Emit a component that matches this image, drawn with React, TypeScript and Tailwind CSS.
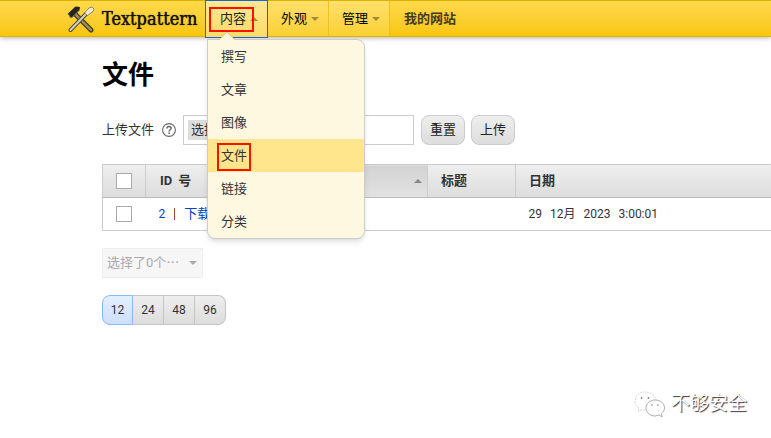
const menus = [
  { label: '内容', open: true },
  { label: '外观', open: false },
  { label: '管理', open: false },
];

const contentItems = ['撰写', '文章', '图像', '文件', '链接', '分类'];

const pageSizes = [12, 24, 48, 96];

function Arrow({ up = false, className = '' }) {
  return (
    <svg width="8" height="4" viewBox="0 0 8 4" className={className} aria-hidden="true">
      <path d={up ? 'M0 4 4 0l4 4z' : 'M0 0h8L4 4z'} fill="currentColor" />
    </svg>
  );
}

function Logo() {
  return (
    <svg width="28" height="28" viewBox="0 0 28 28" className="shrink-0" aria-hidden="true">
      {/* hammer */}
      <path d="M8 9 24 25" stroke="#4a4020" strokeWidth="5" strokeLinecap="round" />
      <path d="M8 9 24 25" stroke="#a39258" strokeWidth="2.4" strokeLinecap="round" />
      <path d="M1 8.5 8.5 1.5 13 2 12.5 5 5 12.5 3.5 12.5z" fill="#26251f" />
      <path d="M1 8.5 3.5 12.5 5 12.5 12.5 5" fill="none" stroke="#6d6a5c" />
      {/* chisel */}
      <path d="M3.5 25 19 9" stroke="#4d4a3a" strokeWidth="4" strokeLinecap="round" />
      <path d="M3.5 25 19 9" stroke="#d6d0b4" strokeWidth="2" strokeLinecap="round" />
      <path d="M17.5 8 22 3 25 2 27 4 26 6.500 20.5 10.5z" fill="#efe9cf" stroke="#77715a" strokeWidth="0.8" />
    </svg>
  );
}

function ContentMenu() {
  return (
    <div className="absolute left-px top-[38px] z-20 w-[158px]">
      <svg width="16" height="9" viewBox="0 0 16 9" className="absolute -top-2 left-3" aria-hidden="true">
        <path d="M0 9 8 1l8 8z" fill="#fff8e1" />
        <path d="M0 9 8 1l8 8" fill="none" stroke="#d8c070" strokeWidth="0.8" />
      </svg>
      <ul className="overflow-hidden rounded-b-lg rounded-tr-lg border border-[#ccc] bg-[#fff8e1] shadow-md">
        {contentItems.map((item) => (
          <li key={item} className={item === '文件' ? 'relative bg-[#ffe68c]' : 'relative'}>
            <a href="#" className="block px-[13px] text-[13px] leading-[33px] text-[#333]">
              {item}
            </a>
            {item === '文件' && (
              <span className="pointer-events-none absolute left-[9px] top-1 h-7 w-[34px] border-2 border-[#f10]" />
            )}
          </li>
        ))}
      </ul>
    </div>
  );
}

function Header() {
  return (
    <header className="relative z-10 flex h-[37px] border-y border-[#dfb000] bg-linear-to-b from-[#ffd94a] to-[#f9c606] pl-[67px] shadow-[0_1px_5px_rgba(0,0,0,0.3)]">
      <a href="#" className="flex w-[138px] shrink-0 items-center gap-[7px] font-['DejaVu_Serif_Condensed','DejaVu_Serif',serif] text-[18px] text-[#111] [text-shadow:0_0_1px_#111]">
        <Logo />
        Textpattern
      </a>
      <nav className="flex">
        {menus.map((menu) => (
          <div
            key={menu.label}
            className={
              menu.open
                ? 'relative -my-px h-[38px] w-[63px] border border-[#1766d0] bg-linear-to-b from-[#ffe893] to-[#fbdb68]'
                : 'w-[61px] border-r border-[#eec21c] bg-linear-to-b from-[#ffe06a] to-[#fad02f]'
            }
          >
            <button
              className={
                menu.open
                  ? 'flex h-9 w-full items-center gap-1 pl-3.5 text-[13px] text-[#222]'
                  : 'flex h-9 w-full items-center gap-1 pl-[13px] text-[13px] text-black'
              }
            >
              {menu.label}
              <Arrow up={menu.open} className="text-[#a48a35]" />
            </button>
            {menu.open && (
              <>
                <span className="pointer-events-none absolute left-[3px] top-1.5 h-[25px] w-[45px] border-2 border-[#f10]" />
                <ContentMenu />
              </>
            )}
          </div>
        ))}
      </nav>
      <a href="#" className="flex items-center pl-3.5 text-[13px] font-bold text-[#443c20]">
        我的网站
      </a>
    </header>
  );
}

function UploadForm() {
  const button =
    'h-[30px] rounded-lg border border-[#ccc] bg-linear-to-b from-[#eee] to-[#ddd] px-2 text-[13px] text-[#222]';
  return (
    <form className="mt-6 flex items-center" onSubmit={(e) => e.preventDefault()}>
      <label htmlFor="upload" className="shrink-0">上传文件</label>
      <a href="#" aria-label="帮助" className="ml-2 mr-[7px] shrink-0">
        <svg width="14" height="14" viewBox="0 0 14 14" fill="none" stroke="#666">
          <circle cx="7" cy="7" r="6.4" strokeWidth="1.1" />
          <path d="M4.9 5.5c0-2.8 4.3-2.7 4.3-.3 0 1.5-2.1 1.6-2.1 3.2" strokeWidth="1.5" />
          <path d="M7.1 9.5v1.5" strokeWidth="1.5" />
        </svg>
      </a>
      <label className="relative flex h-[30px] w-[231px] items-center border border-[#ccc] px-1">
        <input id="upload" type="file" className="sr-only" />
        <span className="bg-[#ddd] pl-[3px] pr-1">选择</span>
      </label>
      <button type="reset" className={`${button} ml-[7px]`}>重置</button>
      <button type="submit" className={`${button} ml-1.5`}>上传</button>
    </form>
  );
}

function FileTable() {
  const th = 'border-y border-[#ccc] border-b-[#bbb] px-[13px] text-left font-bold';
  const box = 'block size-4 appearance-none border border-[#aaa] bg-white';
  return (
    <table className="mt-[19px] w-full table-fixed border-collapse border-l border-[#ccc]">
      <colgroup>
        <col className="w-[43px]" />
        <col className="w-[104px]" />
        <col className="w-[178px]" />
        <col className="w-[88px]" />
        <col />
      </colgroup>
      <thead>
        <tr className="h-[33px] bg-linear-to-b from-[#eee] to-[#ddd]">
          <th className={`${th} border-r`}>
            <input type="checkbox" aria-label="全选" className={box} />
          </th>
          <th className={th}>
            <span className="flex items-center gap-1.5 pl-px">
              <span>ID</span>
              <span>号</span>
            </span>
          </th>
          <th className={`${th} border-r bg-linear-to-b from-[#d2d2d2] to-[#e2e2e2]`}>
            <Arrow up className="-mr-2 ml-auto text-[#888]" />
          </th>
          <th className={`${th} border-r`}>标题</th>
          <th className={th}>日期</th>
        </tr>
      </thead>
      <tbody>
        <tr className="h-[33px] border-b border-[#ccc]">
          <td className="px-[13px]">
            <input type="checkbox" aria-label="选择文件 2" className={box} />
          </td>
          <td className="px-[13px] whitespace-nowrap">
            <span className="flex items-center gap-[9px] text-[#04b]">
              <a href="#" className="text-xs">2</a>
              <span className="h-3 w-px bg-[#a54530]" />
              <a href="#">下载</a>
            </span>
          </td>
          <td />
          <td />
          <td className="px-[13px]">
            <time dateTime="2023-12-29T03:00:01" className="flex items-baseline gap-2 text-xs">
              <span>29</span>
              <span>12月</span>
              <span>2023</span>
              <span>3:00:01</span>
            </time>
          </td>
        </tr>
      </tbody>
    </table>
  );
}

function Watermark() {
  return (
    <div className="absolute right-6 top-[390px] flex items-center gap-1.5 text-[19px] leading-7 text-white [text-shadow:1px_1px_1px_#333]">
      <svg width="31" height="27" viewBox="0 0 31 27" fill="#fff" stroke="#ccc" strokeWidth="0.8" aria-hidden="true">
        <path d="M11 1C5 1 1 5 1 10c0 3 1.5 5.5 4 7l-1 4 4-2.5c9 2 14-3 14-8.5C22 5 17 1 11 1z" strokeDasharray="2 1" />
        <path d="M21 9c-5 0-9 3.5-9 8s4 8 9 8l4-1 3 2-.5-3.5c2-1.5 3-3.5 3-5.5 0-4.5-4-8-9.5-8z" stroke="#999" />
        <g fill="#888" stroke="none">
          <circle cx="7.5" cy="7" r="0.9" />
          <circle cx="14.5" cy="7" r="0.9" />
          <circle cx="18" cy="14" r="0.8" />
          <circle cx="24" cy="14" r="0.8" />
        </g>
      </svg>
      不够安全
    </div>
  );
}

export default function App() {
  return (
    <div className="relative min-h-screen overflow-x-hidden bg-white font-[Roboto,'Noto_Sans_CJK_SC',sans-serif] text-[13px] leading-5 text-[#333]">
      <Header />

      <main className="pl-[102px] pt-[22px]">
        <h1 className="text-[26px] font-bold leading-8 text-black">文件</h1>
        <UploadForm />
        <FileTable />

        {/* Bulk action */}
        <div className="relative mt-[17px] w-[101px] text-[#aaa]">
          <select
            disabled
            aria-label="批量操作"
            className="h-[30px] w-full appearance-none border border-[#eee] bg-[#f6f6f6] px-1 text-[13px] opacity-100"
          >
            <option>选择了0个⋯</option>
          </select>
          <Arrow className="pointer-events-none absolute right-1.5 top-[13px]" />
        </div>

        {/* Page size */}
        <div className="mt-[17px] flex">
          {pageSizes.map((size) => (
            <button
              key={size}
              className={
                size === 12
                  ? 'h-[30px] w-[31px] rounded-l-lg border border-[#8ab8f8] bg-linear-to-b from-[#e4eeff] to-[#cce0ff] text-xs'
                  : 'h-[30px] w-[31px] border border-l-0 border-[#c4c4c4] bg-linear-to-b from-[#eee] to-[#ddd] text-xs last:rounded-r-lg'
              }
            >
              {size}
            </button>
          ))}
        </div>
      </main>

      <Watermark />
    </div>
  );
}
